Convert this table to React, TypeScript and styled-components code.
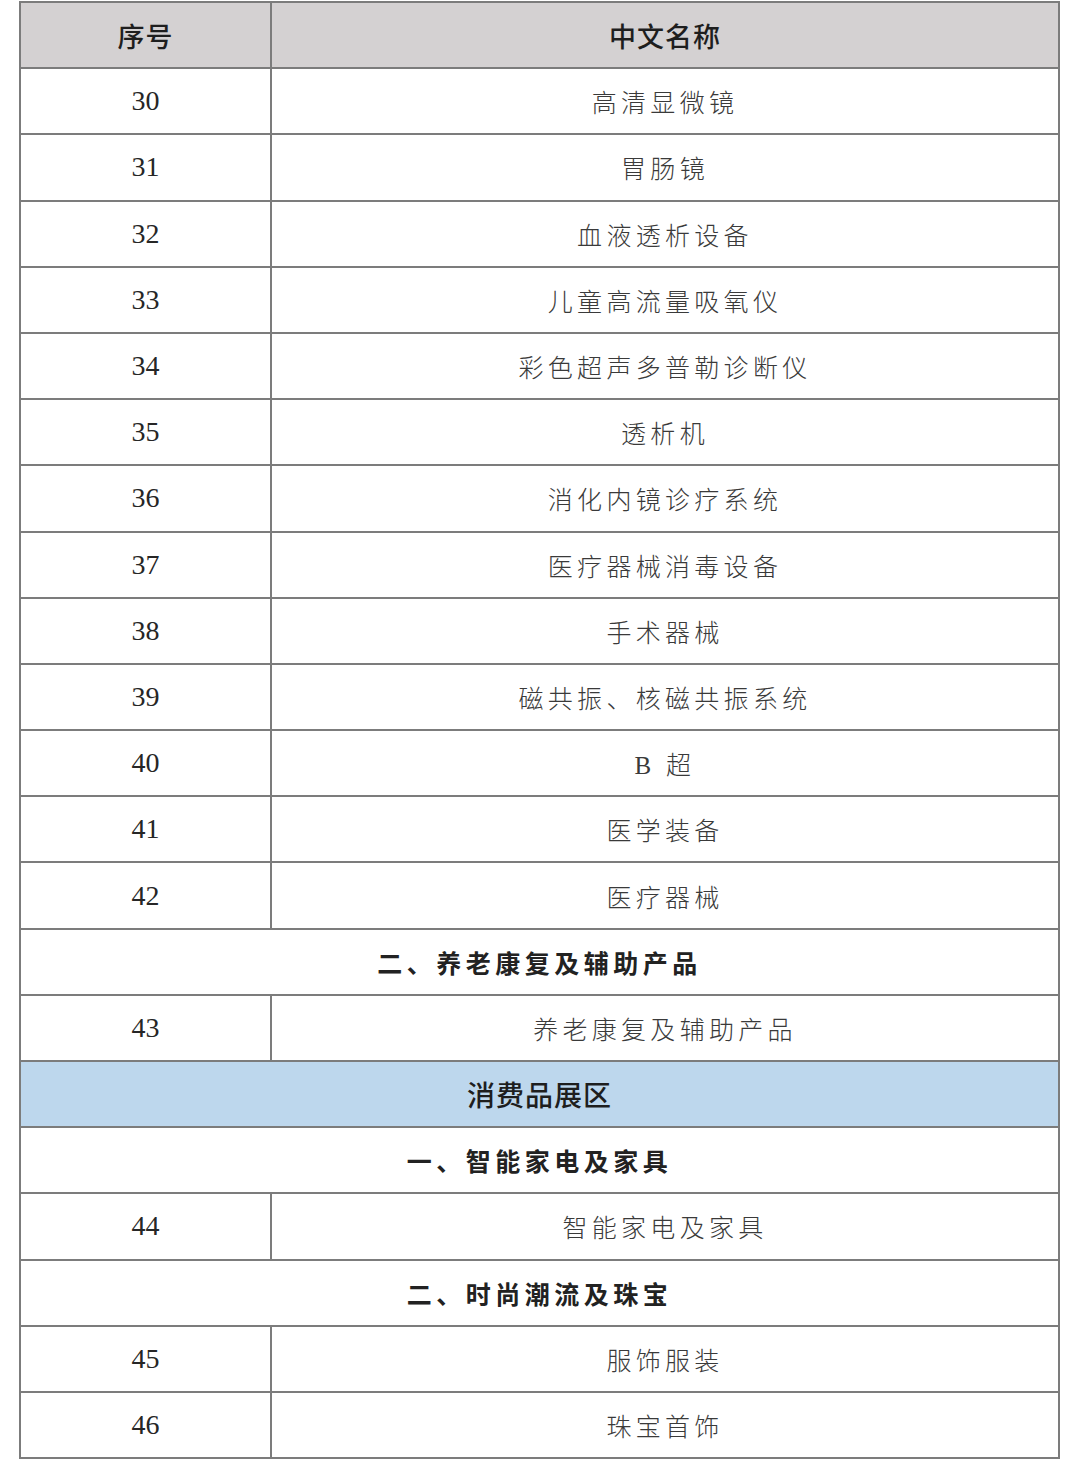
import styled, { createGlobalStyle } from 'styled-components';

type Row =
  | { kind: 'item'; no: number; name: string }
  | { kind: 'section'; title: string }
  | { kind: 'zone'; title: string };

const rows: Row[] = [
  { kind: 'item', no: 30, name: '高清显微镜' },
  { kind: 'item', no: 31, name: '胃肠镜' },
  { kind: 'item', no: 32, name: '血液透析设备' },
  { kind: 'item', no: 33, name: '儿童高流量吸氧仪' },
  { kind: 'item', no: 34, name: '彩色超声多普勒诊断仪' },
  { kind: 'item', no: 35, name: '透析机' },
  { kind: 'item', no: 36, name: '消化内镜诊疗系统' },
  { kind: 'item', no: 37, name: '医疗器械消毒设备' },
  { kind: 'item', no: 38, name: '手术器械' },
  { kind: 'item', no: 39, name: '磁共振、核磁共振系统' },
  { kind: 'item', no: 40, name: 'B 超' },
  { kind: 'item', no: 41, name: '医学装备' },
  { kind: 'item', no: 42, name: '医疗器械' },
  { kind: 'section', title: '二、养老康复及辅助产品' },
  { kind: 'item', no: 43, name: '养老康复及辅助产品' },
  { kind: 'zone', title: '消费品展区' },
  { kind: 'section', title: '一、智能家电及家具' },
  { kind: 'item', no: 44, name: '智能家电及家具' },
  { kind: 'section', title: '二、时尚潮流及珠宝' },
  { kind: 'item', no: 45, name: '服饰服装' },
  { kind: 'item', no: 46, name: '珠宝首饰' },
];

export default function App(): JSX.Element {
  return (
    <>
      <GlobalStyle />
      <Page>
        <Table>
          <colgroup>
            <col style={{ width: 251 }} />
            <col />
          </colgroup>
          <thead>
            <tr>
              <HeadCell>序号</HeadCell>
              <HeadCell>中文名称</HeadCell>
            </tr>
          </thead>
          <tbody>
            {rows.map((row, i) => {
              if (row.kind === 'item') {
                return (
                  <tr key={i}>
                    <NumCell>{row.no}</NumCell>
                    <NameCell>{row.name}</NameCell>
                  </tr>
                );
              }
              if (row.kind === 'zone') {
                return (
                  <tr key={i}>
                    <ZoneCell colSpan={2}>{row.title}</ZoneCell>
                  </tr>
                );
              }
              return (
                <tr key={i}>
                  <SectionCell colSpan={2}>{row.title}</SectionCell>
                </tr>
              );
            })}
          </tbody>
        </Table>
      </Page>
    </>
  );
}

const GlobalStyle = createGlobalStyle`
  html, body {
    margin: 0;
    padding: 0;
    background: #ffffff;
  }
`;

const Page = styled.div`
  padding: 1px 20px 0 19px;
  box-sizing: border-box;
  width: 1080px;
`;

const Table = styled.table`
  width: 100%;
  border-collapse: collapse;
  table-layout: fixed;
  border: 2px solid #7c7c7c;

  td, th {
    border: 2px solid #7c7c7c;
    height: 64.2px;
    padding: 0;
    text-align: center;
    vertical-align: middle;
  }
`;

const HeadCell = styled.th`
  background: #d4d1d2;
  color: #1e1e1e;
  font-family: "Noto Sans CJK SC", sans-serif;
  font-size: 27px;
  font-weight: 500;
  letter-spacing: 1px;
`;

const NumCell = styled.td`
  color: #262626;
  font-family: "Liberation Serif", serif;
  font-size: 28px;
`;

const NameCell = styled.td`
  color: #3a3a3a;
  font-family: "Liberation Serif", "Noto Sans CJK SC", serif;
  font-size: 25px;
  font-weight: 300;
  letter-spacing: 4.3px;
`;

const SectionCell = styled.td`
  color: #222222;
  font-family: "Noto Sans CJK SC", sans-serif;
  font-size: 25px;
  font-weight: 700;
  letter-spacing: 4.5px;
`;

const ZoneCell = styled.td`
  background: #bdd7ed;
  color: #1e1e1e;
  font-family: "Noto Sans CJK SC", sans-serif;
  font-size: 28px;
  font-weight: 500;
  letter-spacing: 1px;
`;
